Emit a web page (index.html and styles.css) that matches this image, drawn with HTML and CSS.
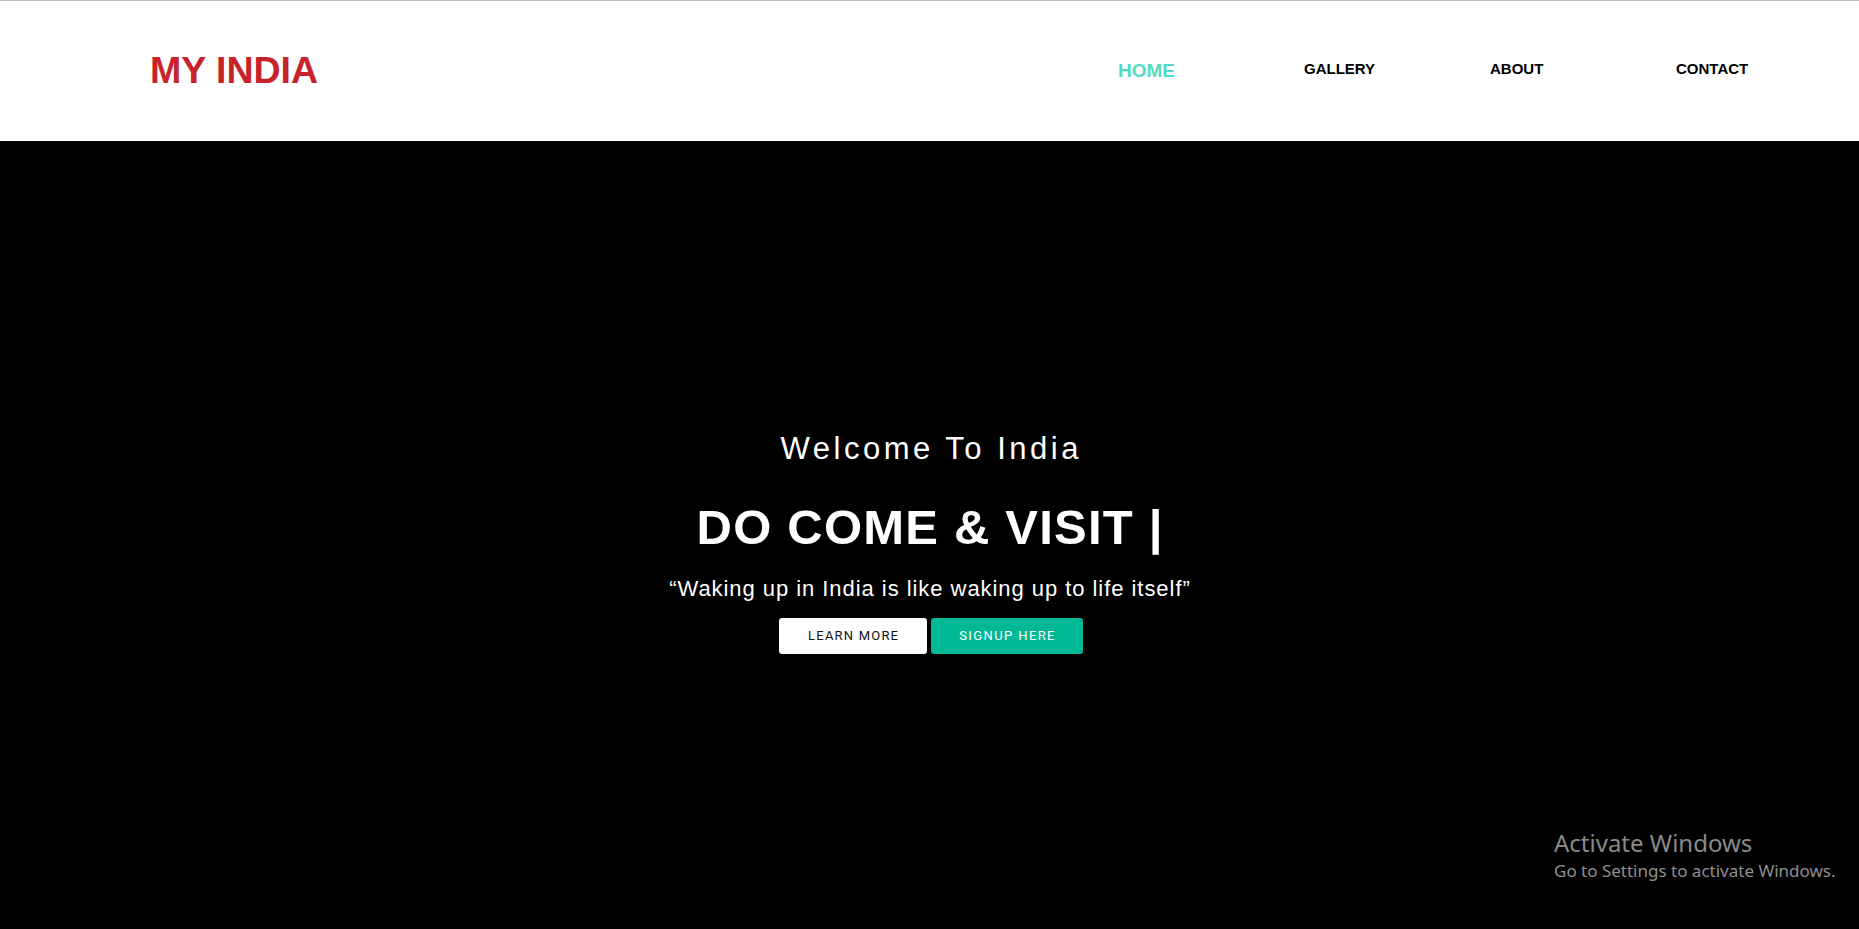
FILE: index.html
```html
<!DOCTYPE html>
<html lang="en">
<head>
<meta charset="utf-8">
<title>My India</title>
<link rel="stylesheet" href="styles.css">
</head>
<body>
<header class="site-header">
  <a class="logo" href="#">MY INDIA</a>
  <nav class="main-nav">
    <ul class="nav-list">
      <li><a class="nav-link active" href="#">HOME</a></li>
      <li><a class="nav-link" href="#">GALLERY</a></li>
      <li><a class="nav-link" href="#">ABOUT</a></li>
      <li><a class="nav-link" href="#">CONTACT</a></li>
    </ul>
  </nav>
</header>
<section class="hero">
  <h2 class="hero-welcome">Welcome To India</h2>
  <h1 class="hero-title">DO COME &amp; VISIT <span class="cursor">|</span></h1>
  <p class="hero-quote">“Waking up in India is like waking up to life itself”</p>
  <div class="hero-actions">
    <a class="btn btn-light" href="#">LEARN MORE</a>
    <a class="btn btn-teal" href="#">SIGNUP HERE</a>
  </div>
</section>
<div class="activate">
  <div class="activate-title">Activate Windows</div>
  <div class="activate-sub">Go to Settings to activate Windows.</div>
</div>
</body>
</html>
```
FILE: styles.css
```css
*, *::before, *::after { box-sizing: border-box; }
html, body { margin: 0; padding: 0; }
body {
  font-family: "Liberation Sans", Arial, sans-serif;
  background: #000;
  overflow: hidden;
}

.site-header {
  height: 141px;
  border-top: 1px solid #c3c3c3;
  background: #fff;
  display: flex;
  align-items: flex-start;
  justify-content: space-between;
  padding: 48px 0 0 150px;
}
.logo {
  font-size: 37.5px;
  font-weight: 700;
  line-height: 42px;
  color: #c8232c;
  text-decoration: none;
}
.nav-list {
  list-style: none;
  margin: 11px 0 0;
  padding: 0;
  display: grid;
  grid-template-columns: repeat(3, 186px) 183px;
}
.nav-link {
  font-size: 15px;
  font-weight: 700;
  color: #000;
  text-decoration: none;
}
.nav-link.active {
  font-size: 19px;
  color: #4fdcc2;
}

.hero {
  height: 788px;
  padding-top: 15px;
  display: flex;
  flex-direction: column;
  align-items: center;
  justify-content: center;
  color: #fff;
  text-align: center;
}
.hero-welcome {
  margin: 0;
  font-size: 31px;
  font-weight: 400;
  line-height: 36px;
  letter-spacing: 3.5px;
  padding-left: 3.5px;
}
.hero-title {
  margin: 32px 0 0;
  font-size: 49px;
  font-weight: 700;
  line-height: 56px;
  letter-spacing: 1.2px;
  padding-left: 1.2px;
}
.hero-quote {
  margin: 22px 0 0;
  font-size: 22px;
  line-height: 24px;
  letter-spacing: 0.95px;
  padding-left: 0.95px;
}
.hero-actions {
  margin-top: 17px;
  display: flex;
  gap: 4px;
  padding-left: 3px;
}
.btn {
  display: block;
  height: 36px;
  line-height: 36px;
  padding: 0 27px 0 28px;
  font-family: Roboto, "Liberation Sans", sans-serif;
  font-size: 13px;
  letter-spacing: 1px;
  border-radius: 3px;
  text-decoration: none;
}
.btn-light {
  background: #fff;
  color: #111;
  letter-spacing: 1.2px;
  padding: 0 28px 0 29px;
}
.btn-teal {
  background: #00b894;
  color: #fff;
  letter-spacing: 1.4px;
}

.activate {
  position: absolute;
  left: 1554px;
  top: 827px;
  font-family: "Noto Sans", "Open Sans", sans-serif;
  color: #8a8a8a;
}
.activate-title {
  font-size: 24px;
  line-height: 32px;
}
.activate-sub {
  font-size: 17px;
  line-height: 24px;
  color: #8f8f8f;
}
```
